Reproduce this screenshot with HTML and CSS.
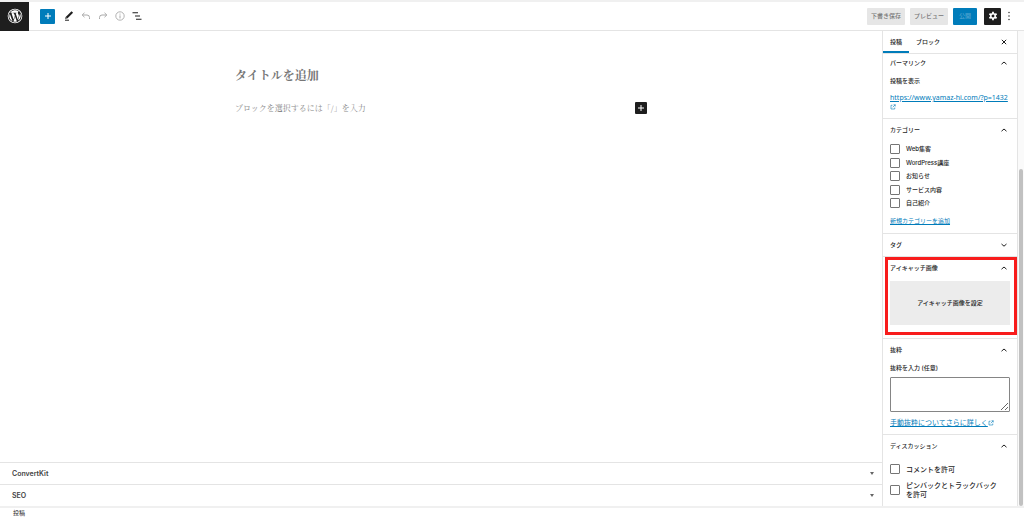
FILE: index.html
```html
<!DOCTYPE html>
<html lang="ja">
<head>
    <meta charset="UTF-8">
    <title>投稿を追加</title>
    <link rel="stylesheet" href="styles.css">
</head>
<body>
<svg class="defs" width="0" height="0">
    <symbol id="up" viewBox="0 0 8 8"><path d="M1.500 5.200 4 3l2.500 2.200" fill="none" stroke="currentColor"/></symbol>
    <symbol id="down" viewBox="0 0 8 8"><path d="M1.500 3 4 5.200 6.500 3" fill="none" stroke="currentColor"/></symbol>
    <symbol id="ext" viewBox="0 0 12 12"><path d="M5 2.500H2v7.500h7.500V7M7 1.500h3.500V5M10.500 1.500 5.500 6.500" fill="none" stroke="currentColor" stroke-width="1.200"/></symbol>
</svg>
<div class="editor">
    <header class="header">
        <a class="logo" href="#" aria-label="WordPress">
            <svg width="16" height="16" viewBox="0 0 24 24" fill="#fff"><path d="M12 1a11 11 0 1 0 0 22 11 11 0 0 0 0-22zm0 1.200a9.800 9.800 0 1 1 0 19.600 9.800 9.800 0 0 1 0-19.600zM3.400 12c0 3.400 2 6.400 4.900 7.700L4.200 8.500A8.600 8.600 0 0 0 3.400 12zm14.400-.4c0-1.100-.4-1.800-.7-2.400-.4-.7-.9-1.300-.9-2.100s.6-1.600 1.500-1.600h.1A8.600 8.600 0 0 0 4.800 7.300h.6l2.300-.1c.5 0 .5.700 0 .7l-1 .1 3.200 9.300 1.900-5.700L10.400 8l-.9-.1c-.5 0-.4-.7 0-.7l2.200.1 2.300-.1c.5 0 .5.700 0 .7l-1 .1 3.100 9.300.9-2.900c.5-1.200.8-2.100.8-2.800zm-5.700 1.200-2.500 7.400a8.600 8.600 0 0 0 5.200-.1l-.1-.1-2.600-7.200zm7.400-4.900c.1 1.400-.2 2.300-.6 3.500l-2.600 7.500A8.600 8.600 0 0 0 19.500 7.900z"/></svg>
        </a>
        <div class="tools">
            <button class="tool add" aria-label="ブロックを追加"><svg width="8" height="8" viewBox="0 0 8 8"><path d="M4 1v6M1 4h6" stroke="#fff"/></svg></button>
            <button class="tool" aria-label="ツール"><svg width="10" height="10" viewBox="0 0 10 10"><path d="M2.500 6.800 8.300 1" stroke="#1e1e1e" stroke-width="2.200"/><path d="M1 7.800 1.700 6l1.400 1.400z" fill="#1e1e1e"/><path d="M1 9.200h4" stroke="#1e1e1e"/></svg></button>
            <button class="tool off" aria-label="元に戻す"><svg width="10" height="10" viewBox="0 0 10 10"><path d="M3.500 1.800 1.200 4l2.300 2.200M1.200 4H6q2.500 0 2.500 2.500V8" fill="none" stroke="currentColor"/></svg></button>
            <button class="tool off" aria-label="やり直す"><svg width="10" height="10" viewBox="0 0 10 10"><path d="M6.500 1.800 8.800 4 6.500 6.200M8.800 4H4Q1.500 4 1.500 6.500V8" fill="none" stroke="currentColor"/></svg></button>
            <button class="tool off" aria-label="詳細"><svg width="10" height="10" viewBox="0 0 10 10"><circle cx="5" cy="5" r="4.200" fill="none" stroke="currentColor" stroke-width=".9"/><path d="M5 4.400v3M5 2.600v1" stroke="currentColor"/></svg></button>
            <button class="tool" aria-label="リスト表示"><svg width="10" height="10" viewBox="0 0 10 10"><path d="M.5 1.800H6M3 5h5M4 8.200h5.500" stroke="#1e1e1e" stroke-width="1.100"/></svg></button>
        </div>
        <div class="actions">
            <button class="btn">下書き保存</button>
            <button class="btn">プレビュー</button>
            <button class="btn publish">公開</button>
            <button class="btn gear" aria-label="設定"><svg width="10" height="10" viewBox="0 0 10 10"><path d="M5 .8v8.400M1.400 2.900l7.200 4.200M1.400 7.100l7.200-4.200" stroke="#fff" stroke-width="1.800"/><circle cx="5" cy="5" r="2.200" fill="#1e1e1e" stroke="#fff" stroke-width="1.500"/></svg></button>
            <button class="more" aria-label="オプション"><svg width="4" height="10" viewBox="0 0 4 10" fill="#1e1e1e"><circle cx="2" cy="1.500" r=".7"/><circle cx="2" cy="5" r=".7"/><circle cx="2" cy="8.500" r=".7"/></svg></button>
        </div>
    </header>
    <div class="body">
        <main class="main">
            <div class="canvas">
                <div class="post">
                    <h1 class="title">タイトルを追加</h1>
                    <div class="block">
                        <p class="prompt">ブロックを選択するには「/」を入力</p>
                        <button class="inserter" aria-label="ブロックを追加"><svg width="8" height="8" viewBox="0 0 8 8"><path d="M4 1v6M1 4h6" stroke="#fff"/></svg></button>
                    </div>
                </div>
            </div>
            <button class="metabox">ConvertKit<span class="arrow"></span></button>
            <button class="metabox">SEO<span class="arrow"></span></button>
        </main>
        <aside class="sidebar">
            <div class="tabs">
                <button class="tab active">投稿</button>
                <button class="tab">ブロック</button>
                <button class="close" aria-label="閉じる"><svg width="6" height="6" viewBox="0 0 6 6"><path d="m.8.8 4.400 4.400M5.200.8.8 5.200" stroke="#1e1e1e"/></svg></button>
            </div>
            <section class="panel permalink">
                <button class="panel-title">パーマリンク<svg width="8" height="8"><use href="#up"/></svg></button>
                <p class="view">投稿を表示</p>
                <a class="url" href="#">https://www.yamaz-hi.com/?p=1432<br><svg class="ext" width="6" height="6"><use href="#ext"/></svg></a>
            </section>
            <section class="panel">
                <button class="panel-title">カテゴリー<svg width="8" height="8"><use href="#up"/></svg></button>
                <div class="cats">
                    <label class="check"><input type="checkbox">Web集客</label>
                    <label class="check"><input type="checkbox">WordPress講座</label>
                    <label class="check"><input type="checkbox">お知らせ</label>
                    <label class="check"><input type="checkbox">サービス内容</label>
                    <label class="check"><input type="checkbox">自己紹介</label>
                </div>
                <a class="new-cat" href="#">新規カテゴリーを追加</a>
            </section>
            <section class="panel">
                <button class="panel-title">タグ<svg width="8" height="8"><use href="#down"/></svg></button>
            </section>
            <section class="panel featured">
                <button class="panel-title">アイキャッチ画像<svg width="8" height="8"><use href="#up"/></svg></button>
                <button class="set-image">アイキャッチ画像を設定</button>
                <div class="mark"></div>
            </section>
            <section class="panel excerpt">
                <button class="panel-title">抜粋<svg width="8" height="8"><use href="#up"/></svg></button>
                <label class="excerpt-label" for="excerpt">抜粋を入力 (任意)</label>
                <textarea id="excerpt"></textarea>
                <a class="help" href="#">手動抜粋についてさらに詳しく<svg class="ext" width="6" height="6"><use href="#ext"/></svg></a>
            </section>
            <section class="panel discussion">
                <button class="panel-title">ディスカッション<svg width="8" height="8"><use href="#up"/></svg></button>
                <label class="check"><input type="checkbox">コメントを許可</label>
                <label class="check"><input type="checkbox"><span>ピンバックとトラックバックを許可</span></label>
            </section>
        </aside>
        <div class="scroll"><div class="thumb"></div></div>
    </div>
    <footer class="footer">投稿</footer>
</div>
</body>
</html>
```

FILE: styles.css
```css
*{
    box-sizing: border-box;
    margin: 0;
    padding: 0;
}
body{
    font-family: Inter, "Noto Sans CJK JP", sans-serif;
    font-size: 6px;
    line-height: 8px;
    color: #1e1e1e;
    background: #fff;
}
button{
    font: inherit;
    color: inherit;
    background: none;
    border: 0;
    cursor: pointer;
}
svg{
    display: block;
}
a{
    color: #007cba;
}
.defs{
    position: absolute;
}
.editor{
    display: flex;
    flex-direction: column;
    height: 100vh;
    border-top: 2px solid #f0f0f0;
}
/* header */
.header{
    display: flex;
    align-items: center;
    height: 29px;
    border-bottom: 1px solid #e4e4e4;
}
.logo{
    display: flex;
    align-items: center;
    justify-content: center;
    width: 29px;
    height: 29px;
    background: #1e1e1e;
}
.tools{
    display: flex;
    flex: 1;
    gap: 2px;
    margin-left: 11px;
}
.tool{
    display: flex;
    align-items: center;
    justify-content: center;
    width: 15px;
    height: 15px;
}
.tool.add{
    margin-right: 4px;
    background: #007cba;
    border-radius: 1px;
}
.tool.off{
    color: #aaa;
}
.actions{
    display: flex;
    align-items: center;
    gap: 5px;
    padding-right: 12px;
}
.btn{
    width: 38px;
    height: 17px;
    background: #e6e6e6;
    border-radius: 1px;
    color: #777;
    font-weight: 500;
}
.publish{
    width: 24px;
    background: #007cba;
    color: #4ea3cf;
}
.gear{
    display: flex;
    align-items: center;
    justify-content: center;
    width: 17px;
    margin-left: 2px;
    background: #1e1e1e;
}
.more{
    width: 6px;
    padding-left: 1px;
}
.body{
    display: flex;
    flex: 1;
    min-height: 0;
}
/* canvas */
.main{
    display: flex;
    flex-direction: column;
    flex: 1;
}
.canvas{
    flex: 1;
    padding-top: 34px;
}
.post{
    width: 412px;
    margin: 0 auto;
    font-family: "Noto Serif CJK JP", "Noto Serif JP", "Liberation Serif", serif;
}
.title{
    margin-bottom: 17px;
    font-size: 12px;
    line-height: 20px;
    font-weight: 700;
    color: #777;
}
.block{
    display: flex;
    align-items: center;
    justify-content: space-between;
}
.prompt{
    font-size: 8px;
    line-height: 12px;
    color: #888;
}
.inserter{
    display: flex;
    align-items: center;
    justify-content: center;
    width: 12px;
    height: 12px;
    background: #1e1e1e;
    border-radius: 1px;
}
.metabox{
    display: flex;
    align-items: center;
    justify-content: space-between;
    height: 22px;
    padding: 0 8px 0 12px;
    border-top: 1px solid #e4e4e4;
    font-size: 7px;
    font-weight: 600;
    color: #444;
}
.arrow{
    border: 2px solid transparent;
    border-top: 3px solid #666;
    border-bottom: 0;
}
/* sidebar */
.sidebar{
    width: 136px;
    border-left: 1px solid #e4e4e4;
    border-right: 1px solid #e4e4e4;
}
.tabs{
    display: flex;
    height: 23px;
    border-bottom: 1px solid #e4e4e4;
}
.tab{
    padding: 0 7px;
    font-weight: 500;
}
.tab.active{
    border-bottom: 2px solid #007cba;
    padding-top: 2px;
}
.close{
    margin-left: auto;
    padding: 0 10px;
}
.panel{
    padding: 0 7px;
    border-bottom: 1px solid #e4e4e4;
}
.panel-title{
    display: flex;
    align-items: center;
    justify-content: space-between;
    width: 100%;
    height: 22px;
    font-weight: 500;
}
.panel-title svg{
    margin-right: 2px;
}
.permalink{
    height: 65px;
}
.permalink .panel-title{
    height: 18px;
}
.view{
    margin: 5px 0 8px;
    font-weight: 500;
}
.url{
    display: block;
    font-family: "Noto Sans", sans-serif;
    font-size: 7px;
    line-height: 9px;
}
.ext{
    display: inline-block;
    vertical-align: middle;
}
.cats{
    display: flex;
    flex-direction: column;
    justify-content: space-between;
    height: 64px;
    margin: 3px 0 9px;
}
.check{
    display: flex;
    align-items: center;
    gap: 6px;
    font-weight: 500;
}
.check input{
    flex: none;
    appearance: none;
    width: 10px;
    height: 10px;
    border: 1px solid #757575;
    border-radius: 1px;
}
.new-cat{
    display: block;
    margin-bottom: 8px;
}
.featured{
    position: relative;
    padding-bottom: 13px;
}
.set-image{
    display: block;
    width: 100%;
    height: 44px;
    margin-top: 2px;
    background: #ececec;
    font-weight: 500;
}
/* highlight frame */
.mark{
    position: absolute;
    top: 0;
    right: 0;
    bottom: 3px;
    left: 2px;
    border: 3px solid #f81c1c;
    pointer-events: none;
}
.excerpt-label{
    display: block;
    margin: 3px 0 5px;
    font-weight: 500;
}
textarea{
    display: block;
    width: 100%;
    height: 35px;
    border: 1px solid #858585;
    border-radius: 1px;
}
.help{
    display: flex;
    align-items: center;
    margin: 7px 0;
    font-size: 7px;
}
.discussion{
    border-bottom: 0;
}
.discussion .check{
    margin-top: 7px;
    padding-right: 10px;
    font-size: 7px;
    line-height: 9px;
}
/* scrollbar */
.scroll{
    width: 6px;
    padding: 138px 1px 0;
    background: #fafafa;
}
.thumb{
    height: 100%;
    background: #c1c1c1;
    border-radius: 2px;
}
.footer{
    height: 13px;
    padding: 1px 13px;
    border-top: 2px solid #f0f0f0;
}
```
